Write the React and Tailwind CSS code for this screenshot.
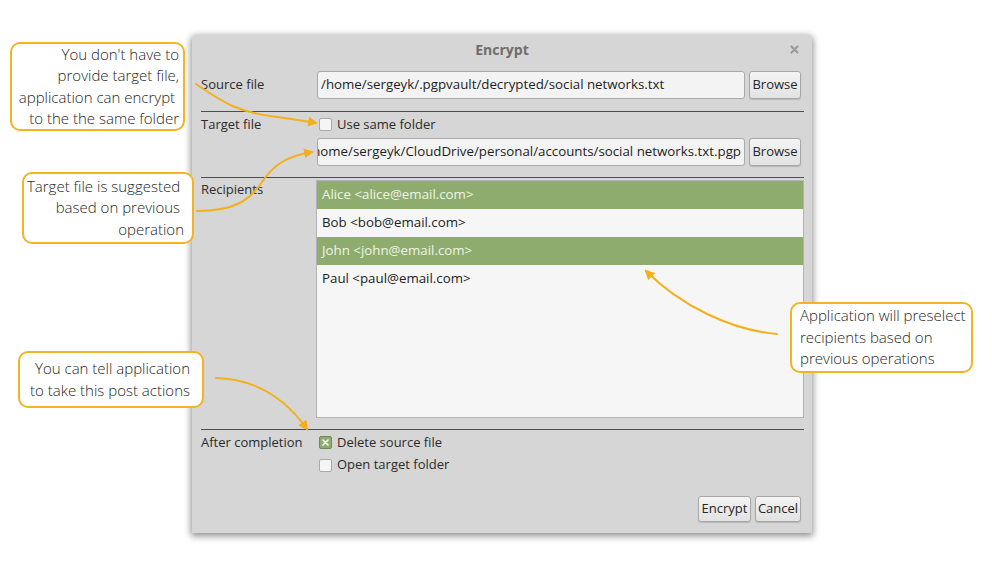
import React from 'react';

const uiFont = { fontFamily: '"Open Sans", "Noto Sans", "DejaVu Sans", sans-serif' };

const Checkbox = ({ checked }) => (
  <span
    className={
      'flex h-[13px] w-[13px] shrink-0 items-center justify-center rounded-[2px] border ' +
      (checked ? 'border-[#6f8a55] bg-[#8fac6f]' : 'border-[#a9a9a9] bg-[#f5f5f5]')
    }
  >
    {checked && (
      <svg width="7" height="7" viewBox="0 0 7 7">
        <path d="M1 1L6 6M6 1L1 6" stroke="#ffffff" strokeWidth="1.6" strokeLinecap="round" />
      </svg>
    )}
  </span>
);

const Button = ({ children, className = '' }) => (
  <button
    className={
      'flex items-center justify-center rounded-[3px] border border-[#a7a7a7] bg-gradient-to-b from-[#f4f4f4] to-[#e2e2e2] text-[13px] text-[#262626] shadow-[0_1px_1px_rgba(0,0,0,0.15)] ' +
      className
    }
  >
    {children}
  </button>
);

const PathInput = ({ value, alignEnd }) => (
  <div
    className={
      'flex h-[28px] flex-1 items-center overflow-hidden whitespace-nowrap rounded-[3px] border border-[#a9a9a9] bg-[#f3f3f3] px-[3px] text-[13.3px] text-[#1e1e1e] ' +
      (alignEnd ? 'justify-end' : '')
    }
  >
    {value}
  </div>
);

const Separator = ({ className = '' }) => <div className={'h-px bg-[#4d4d4d] ' + className} />;

const recipients = [
  { name: 'Alice <alice@email.com>', selected: true },
  { name: 'Bob <bob@email.com>', selected: false },
  { name: 'John <john@email.com>', selected: true },
  { name: 'Paul <paul@email.com>', selected: false },
];

const Callout = ({ className, lines, align = 'right' }) => (
  <div
    className={
      'absolute flex flex-col justify-center rounded-[10px] border-2 border-[#f4b322] bg-white text-[15px] font-light leading-[21.5px] text-[#1f1f1f] ' +
      (align === 'right' ? 'items-end ' : 'items-start ') +
      className
    }
  >
    {lines.map((l, i) => (
      <span key={i} className="whitespace-pre">
        {l}
      </span>
    ))}
  </div>
);

const App = () => {
  return (
    <div className="relative h-[570px] w-[992px] overflow-hidden bg-white pl-[192px] pt-[35px]" style={uiFont}>
      {/* Dialog */}
      <div className="flex h-[498px] w-[620px] flex-col rounded-t-[4px] bg-[#d6d6d6] shadow-[0_2px_7px_1px_rgba(0,0,0,0.45)]">
        <div className="relative flex h-[28px] items-center justify-center">
          <span className="text-[14px] font-bold text-[#6e6e6e]">Encrypt</span>
          <svg className="absolute right-[13px] top-[10px]" width="9" height="9" viewBox="0 0 9 9">
            <path d="M1.5 1.5L7.5 7.5M7.5 1.5L1.5 7.5" stroke="#9a9a9a" strokeWidth="2.2" strokeLinecap="round" />
          </svg>
        </div>

        <div className="flex flex-1 flex-col pl-[9px] pr-[8px] text-[13px] text-[#2b2b2b]">
          {/* Source file */}
          <div className="mt-[8px] flex items-center gap-[4px] pr-[3px]">
            <span className="w-[112px] shrink-0">Source file</span>
            <PathInput value="/home/sergeyk/.pgpvault/decrypted/social networks.txt" />
            <Button className="h-[28px] w-[52px]">Browse</Button>
          </div>

          <Separator className="mt-[12px]" />

          {/* Target file */}
          <div className="flex h-[25px] items-center">
            <span className="w-[118px] shrink-0">Target file</span>
            <Checkbox />
            <span className="ml-[5px]">Use same folder</span>
          </div>
          <div className="mt-[1px] flex items-center gap-[4px] pr-[3px]">
            <span className="w-[112px] shrink-0" />
            <PathInput alignEnd value="/home/sergeyk/CloudDrive/personal/accounts/social networks.txt.pgp" />
            <Button className="h-[28px] w-[52px]">Browse</Button>
          </div>

          <Separator className="mt-[11px]" />

          {/* Recipients */}
          <div className="mt-[2px] flex">
            <span className="w-[115px] shrink-0 pt-px leading-[16px]">Recipients</span>
            <div className="h-[238px] flex-1 border border-[#b4b4b4] bg-[#f6f6f6]">
              {recipients.map((r) => (
                <div
                  key={r.name}
                  className={
                    'flex h-[28px] items-center px-[5px] text-[13.3px] ' +
                    (r.selected ? 'bg-[#8fac6f] text-[#eef4e6]' : 'text-[#222222]')
                  }
                >
                  {r.name}
                </div>
              ))}
            </div>
          </div>

          <Separator className="mt-[11px]" />

          {/* After completion */}
          <div className="flex h-[25px] items-center">
            <span className="w-[118px] shrink-0">After completion</span>
            <Checkbox checked />
            <span className="ml-[5px]">Delete source file</span>
          </div>
          <div className="flex h-[20px] items-center">
            <span className="w-[118px] shrink-0" />
            <Checkbox />
            <span className="ml-[5px]">Open target folder</span>
          </div>

          <div className="mt-auto mb-[11px] flex justify-end gap-[4px] pr-[3px]">
            <Button className="h-[26px] w-[53px]">Encrypt</Button>
            <Button className="h-[26px] w-[46px]">Cancel</Button>
          </div>
        </div>
      </div>

      {/* Callouts */}
      <Callout
        className="left-[10px] top-[42px] h-[89px] w-[175px] pr-[4px]"
        lines={["You don't have to", 'provide target file,', 'application can encrypt ', 'to the the same folder']}
      />
      <Callout
        className="left-[22px] top-[172px] h-[72px] w-[172px] pr-[8px]"
        lines={['Target file is suggested ', 'based on previous ', 'operation']}
      />
      <Callout
        className="left-[790px] top-[302px] h-[71px] w-[183px] pl-[8px]"
        align="left"
        lines={['Application will preselect', 'recipients based on', 'previous operations']}
      />
      <Callout
        className="left-[18px] top-[351px] h-[57px] w-[186px] pr-[12px]"
        lines={['You can tell application', 'to take this post actions']}
      />

      {/* Arrows */}
      <svg className="pointer-events-none absolute left-0 top-0" width="992" height="570" viewBox="0 0 992 570">
        <defs>
          <marker id="ah" viewBox="0 0 10 10" refX="8" refY="5" markerWidth="5" markerHeight="5" orient="auto">
            <path d="M0 0L10 5L0 10Z" fill="#f2b01e" />
          </marker>
        </defs>
        <g fill="none" stroke="#f2b01e" strokeWidth="2" strokeLinecap="round">
          <path d="M196 84 C 225 104, 240 112, 270 116 S 300 120, 316 123" markerEnd="url(#ah)" />
          <path d="M197 211 C 235 211, 250 200, 262 182 C 274 164, 288 156, 312 152" markerEnd="url(#ah)" />
          <path d="M777 334 C 730 330, 680 305, 646 271" markerEnd="url(#ah)" />
          <path d="M216 378 C 255 379, 285 398, 307 429" markerEnd="url(#ah)" />
        </g>
      </svg>
    </div>
  );
};

export default App;
